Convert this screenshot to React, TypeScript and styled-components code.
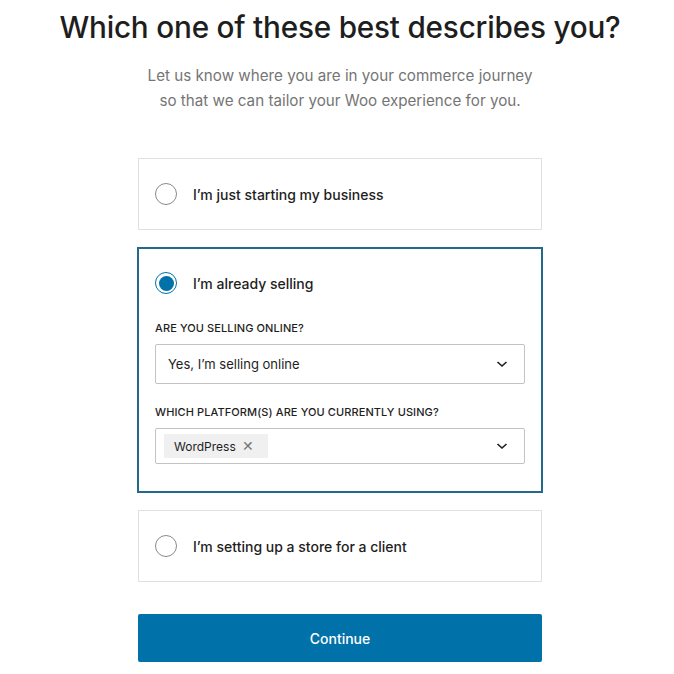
import React from "react";
import styled, { createGlobalStyle } from "styled-components";

const Global = createGlobalStyle`
  html, body { margin: 0; padding: 0; background: #fff; }
  body { font-family: Inter, "Noto Sans", sans-serif; color: #1e1e1e; -webkit-font-smoothing: antialiased; }
  * { box-sizing: border-box; }
`;

const Page = styled.div`
  width: 674px;
  display: flex;
  flex-direction: column;
  align-items: center;
  padding: 8px 0 0 6px;
`;

const Title = styled.h1`
  margin: 0;
  font-size: 29.7px;
  line-height: 38px;
  font-weight: 500;
  letter-spacing: -0.2px;
  color: #1e1e1e;
  text-align: center;
`;

const Subtitle = styled.p`
  margin: 17px 0 0;
  font-size: 15.2px;
  line-height: 25px;
  color: #757575;
  text-align: center;
`;

const Options = styled.div`
  width: 404px;
  margin-top: 45px;
  display: flex;
  flex-direction: column;
  gap: 17px;
`;

const Card = styled.div<{ $selected?: boolean }>`
  border: ${(p) => (p.$selected ? "2px solid #22698a" : "1px solid #e0e0e0")};
  padding: ${(p) => (p.$selected ? "23px 16px 27px 16px" : "24px 16px 24px 16px")};
  display: flex;
  flex-direction: column;
  ${(p) => (p.$selected ? "margin: 0 -1px;" : "")}
`;

const OptionRow = styled.label`
  display: flex;
  align-items: center;
  gap: 16px;
  height: 22px;
  font-size: 14px;
  font-weight: 500;
  color: #1e1e1e;
`;

const Radio = styled.span<{ $checked?: boolean }>`
  width: 22px;
  height: 22px;
  border-radius: 50%;
  border: 1px solid ${(p) => (p.$checked ? "#0071a9" : "#8a8a8a")};
  display: flex;
  align-items: center;
  justify-content: center;
  flex: none;
  &::after {
    content: "";
    display: ${(p) => (p.$checked ? "block" : "none")};
    width: 15px;
    height: 15px;
    border-radius: 50%;
    background: #0071a9;
  }
`;

const FieldLabel = styled.div<{ $top: number }>`
  margin-top: ${(p) => p.$top}px;
  font-size: 11px;
  line-height: 16px;
  font-weight: 500;
  text-transform: uppercase;
  color: #1e1e1e;
  letter-spacing: 0.1px;
`;

const Select = styled.div<{ $h: number }>`
  margin-top: 8px;
  height: ${(p) => p.$h}px;
  border: 1px solid #c3c3c3;
  border-radius: 2px;
  display: flex;
  align-items: center;
  padding: 0 16px 0 12px;
  font-size: 13px;
  color: #1e1e1e;
`;

const SelectText = styled.span`
  flex: 1;
`;

const Chips = styled.div`
  flex: 1;
  display: flex;
  align-items: center;
  margin-left: -4px;
`;

const Chip = styled.span`
  display: inline-flex;
  align-items: center;
  gap: 6px;
  height: 24px;
  padding: 0 14px 0 10px;
  background: #f0f0f0;
  font-size: 12px;
  color: #1e1e1e;
`;

const ChipX = styled.span`
  color: #757575;
  font-size: 14px;
  line-height: 1;
`;

const Chevron = () => (
  <svg width="12" height="8" viewBox="0 0 12 8" fill="none">
    <path d="M1.5 2 L6 6 L10.5 2" stroke="#1e1e1e" strokeWidth="1.6" />
  </svg>
);

const Button = styled.button`
  width: 404px;
  height: 48px;
  margin-top: 32px;
  border: none;
  border-radius: 2px;
  background: #0071a9;
  color: #fff;
  font-family: inherit;
  font-size: 14px;
  font-weight: 500;
  cursor: pointer;
`;

export default function App() {
  return (
    <>
      <Global />
      <Page>
        <Title>Which one of these best describes you?</Title>
        <Subtitle>
          Let us know where you are in your commerce journey
          <br />
          so that we can tailor your Woo experience for you.
        </Subtitle>
        <Options>
          <Card>
            <OptionRow>
              <Radio />
              I’m just starting my business
            </OptionRow>
          </Card>
          <Card $selected>
            <OptionRow>
              <Radio $checked />
              I’m already selling
            </OptionRow>
            <FieldLabel $top={26}>Are you selling online?</FieldLabel>
            <Select $h={40}>
              <SelectText>Yes, I’m selling online</SelectText>
              <Chevron />
            </Select>
            <FieldLabel $top={20}>Which platform(s) are you currently using?</FieldLabel>
            <Select $h={36}>
              <Chips>
                <Chip>
                  WordPress <ChipX>✕</ChipX>
                </Chip>
              </Chips>
              <Chevron />
            </Select>
          </Card>
          <Card>
            <OptionRow>
              <Radio />
              I’m setting up a store for a client
            </OptionRow>
          </Card>
        </Options>
        <Button>Continue</Button>
      </Page>
    </>
  );
}
